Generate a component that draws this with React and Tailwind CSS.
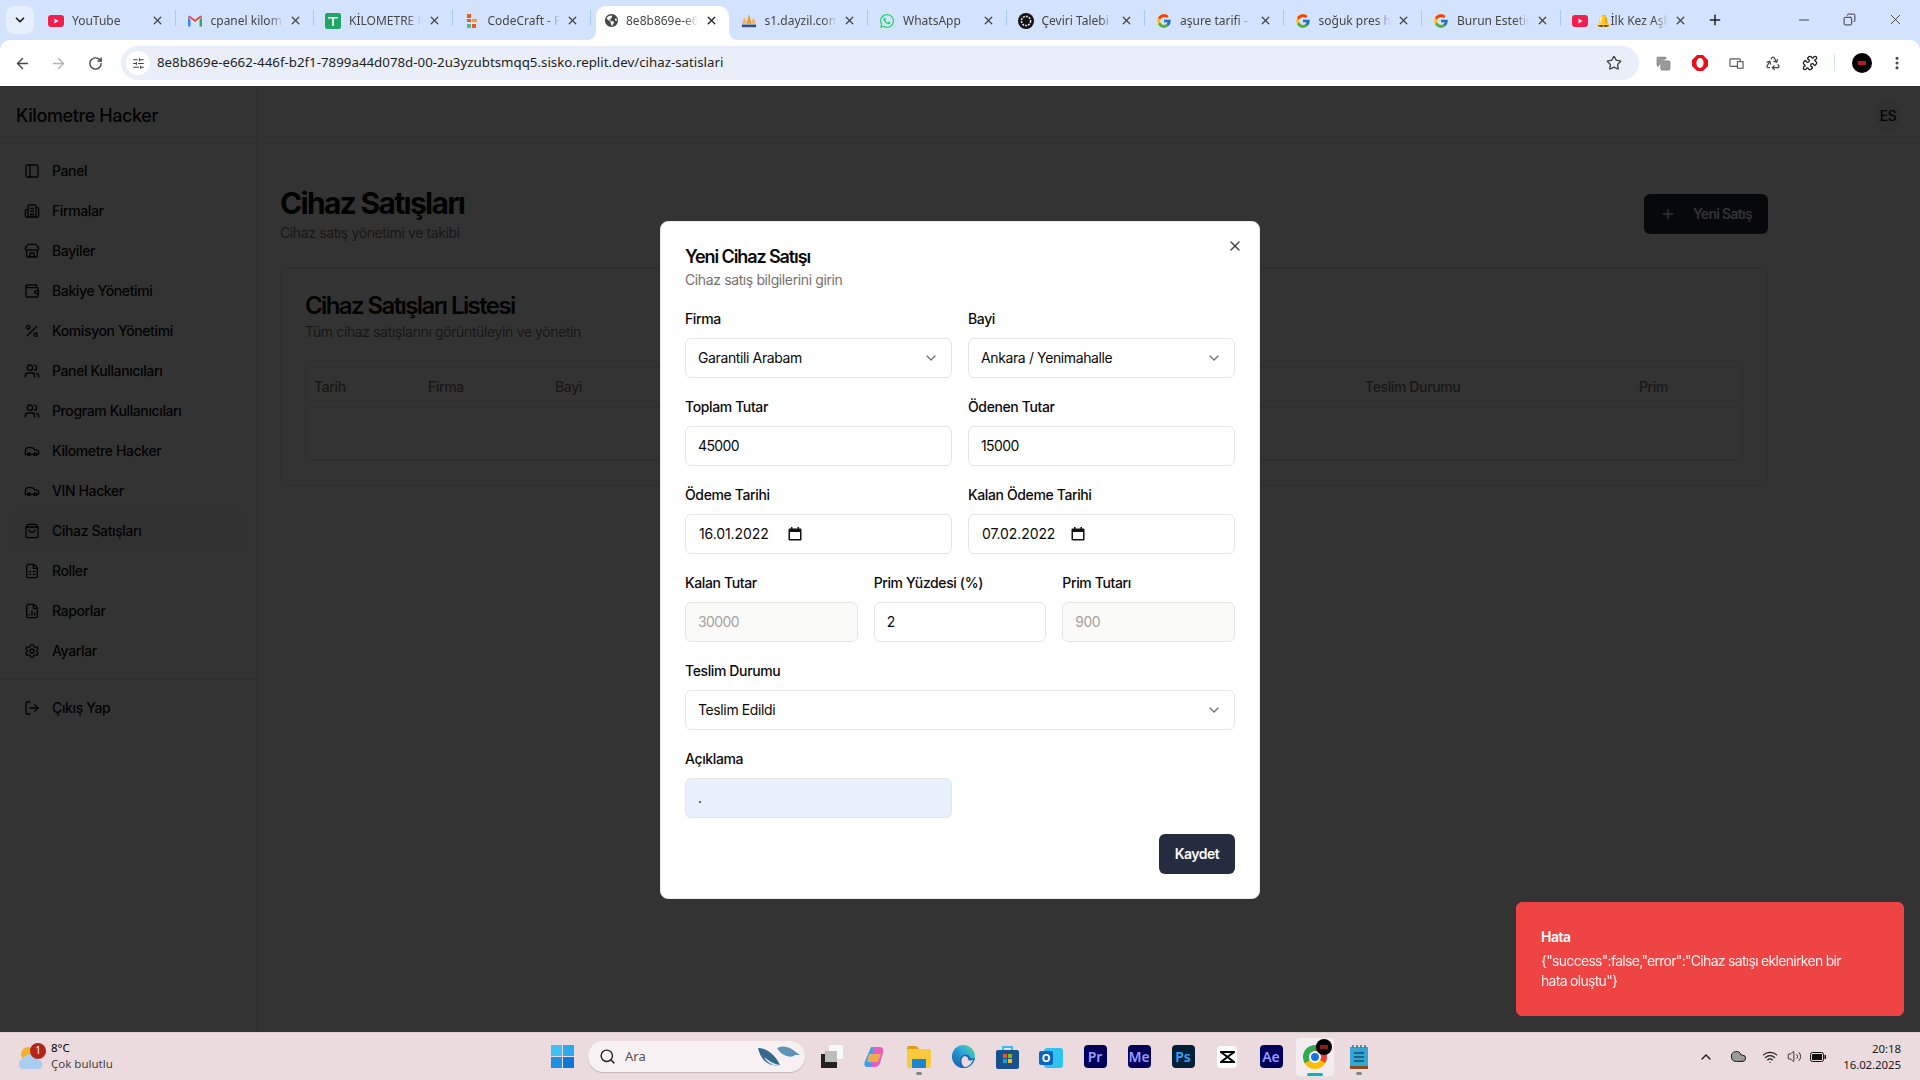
import React from "react";
import {
  PanelLeft, Building2, Store, Wallet, Percent, Users, Car, ShoppingBag, FileSpreadsheet, FileChartColumn,
  Settings, LogOut, Plus, X, ChevronDown, ArrowLeft, ArrowRight, RotateCw, Star, Puzzle, Recycle, MoreVertical,
  Minus, Search, ChevronUp, Wifi, Volume2, Cloud, SlidersHorizontal, Copy,
} from "lucide-react";
import { FcGoogle } from "react-icons/fc";
import { FaWhatsapp, FaGlobeAmericas } from "react-icons/fa";

const YT = () => (
  <svg width="16" height="16" viewBox="0 0 16 16"><rect y="2" width="16" height="12" rx="3" fill="#f01f4b" /><path d="M6.5 5.5v5l4-2.5z" fill="#fff" /></svg>
);
const Gm = () => (
  <svg width="16" height="16" viewBox="0 0 16 16"><path d="M1 3.5v10h2.5V7z" fill="#4285f4" /><path d="M15 3.5v10h-2.5V7z" fill="#34a853" /><path d="M1 3.5 8 9l7-5.5-1.5-1L8 6.800 2.500 2.500z" fill="#ea4335" /></svg>
);
const Sh = () => (
  <svg width="16" height="16" viewBox="0 0 16 16"><rect width="16" height="16" rx="2" fill="#23a566" /><path d="M3 4h10v1.600H8.800V13H7.200V5.600H3z" fill="#fff" /></svg>
);
const CC = () => (
  <svg width="16" height="16" viewBox="0 0 16 16"><rect x="3" y="1" width="4" height="4" fill="#f4581c" /><rect x="8" y="6" width="5" height="3" fill="#f79a2a" /><rect x="3" y="6" width="4" height="3" fill="#f4581c" /><rect x="3" y="11" width="4" height="4" fill="#4cc38a" /><rect x="8" y="11" width="4" height="4" fill="#f4581c" /></svg>
);
const Pma = () => (
  <svg width="18" height="16" viewBox="0 0 18 16"><path d="M9 0l3 11H6z" fill="#f39a2b" /><path d="M4 4l3 7H1z" fill="#f6b25a" /><path d="M14 4l3 7h-6z" fill="#f6b25a" /><rect x="1" y="12" width="16" height="3" fill="#33537f" /></svg>
);
const Gpt = () => (
  <svg width="16" height="16" viewBox="0 0 16 16"><circle cx="8" cy="8" r="8" fill="#111" /><circle cx="8" cy="8" r="4.600" fill="none" stroke="#ddd" strokeWidth="1.600" strokeDasharray="2 1" /></svg>
);
const tabs = [
  { t: "YouTube", i: <YT /> },
  { t: "cpanel kilometre", i: <Gm /> },
  { t: "KİLOMETRE HACKER", i: <Sh /> },
  { t: "CodeCraft - Full", i: <CC /> },
  { t: "8e8b869e-e662", i: <FaGlobeAmericas size={15} className="ml-[3px] text-[#444746]" />, active: true },
  { t: "s1.dayzil.com", i: <Pma /> },
  { t: "WhatsApp", i: <FaWhatsapp size={16} className="text-[#25d366]" /> },
  { t: "Çeviri Talebi", i: <Gpt /> },
  { t: "aşure tarifi - ", i: <FcGoogle size={16} /> },
  { t: "soğuk pres h", i: <FcGoogle size={16} /> },
  { t: "Burun Estetiği", i: <FcGoogle size={16} /> },
  { t: "🔔İlk Kez Aşk", i: <YT /> },
];

const Tab = ({ t, i, active, last }) => (
  <div className="relative flex h-[34px] w-[138.5px] shrink-0 items-center pb-[5px] pl-3 pr-[11px]">
    {active && <span className="absolute bottom-0 left-[6px] right-0 top-0 rounded-t-[10px] bg-white" />}
    {active && <span className="absolute bottom-0 left-[-2px] h-2 w-2 bg-[radial-gradient(circle_at_0_0,transparent_7.5px,white_8px)]" />}
    {active && <span className="absolute bottom-0 right-[-8px] h-2 w-2 bg-[radial-gradient(circle_at_100%_0,transparent_7.5px,white_8px)]" />}
    <span className="relative flex w-[16px] shrink-0 items-center justify-center">{i}</span>
    <span className="relative ml-2 w-[72px] shrink-0 overflow-hidden whitespace-nowrap text-xs text-[#444746] [mask-image:linear-gradient(to_right,black_80%,transparent)]">{t}</span>
    <X size={13} strokeWidth={2.4} className={`relative ml-auto ${active ? "text-[#1f1f1f]" : "text-[#444746]"}`} />
    {!active && !last && <span className="absolute right-[-1px] top-[4px] h-4 w-px bg-[#a8c7fa]" />}
  </div>
);

const TabBar = () => (
  <div className="flex h-10 shrink-0 items-end bg-[#d3e3fd] font-['Noto_Sans',sans-serif] tracking-normal">
    <div className="mb-[6px] ml-[6px] flex h-7 w-7 shrink-0 items-center justify-center rounded-lg bg-[#e6effd]">
      <ChevronDown size={14} strokeWidth={3} className="text-[#1f1f1f]" />
    </div>
    <div className="ml-[2px] flex">
      {tabs.map((x, n) => <Tab key={n} {...x} last={n === 11} />)}
    </div>
    <div className="mb-[6px] ml-[3px] flex h-7 w-7 items-center justify-center"><Plus size={16} strokeWidth={2.2} className="text-[#1f1f1f]" /></div>
    <div className="mb-[12px] ml-auto flex w-[130px] items-center justify-between pl-[6px] pr-[16px] text-[#1f1f1f]">
      <Minus size={16} strokeWidth={1.2} />
      <Copy size={13} strokeWidth={1.6} className="-scale-x-100" />
      <X size={17} strokeWidth={1.1} />
    </div>
  </div>
);

const Toolbar = () => (
  <div className="flex h-[46px] shrink-0 items-center rounded-t-[10px] bg-white pl-[14px] pr-[14px] font-['Noto_Sans',sans-serif] tracking-normal">
    <ArrowLeft size={17} strokeWidth={2} className="text-[#444746]" />
    <ArrowRight size={17} strokeWidth={2} className="ml-[19px] text-[#b0b3b7]" />
    <RotateCw size={15} strokeWidth={2.2} className="ml-[21px] text-[#444746]" />
    <div className="ml-[18px] flex h-[34px] w-[1518px] items-center rounded-full bg-[#e9eef8] pl-[5px] pr-[17px]">
      <span className="flex h-6 w-6 items-center justify-center rounded-full bg-white"><SlidersHorizontal size={13} className="text-[#444746]" /></span>
      <span className="ml-[7px] whitespace-nowrap text-[13.3px] text-[#1f1f1f]">8e8b869e-e662-446f-b2f1-7899a44d078d-00-2u3yzubtsmqq5.sisko.replit.dev/cihaz-satislari</span>
      <Star size={16} strokeWidth={2} className="ml-auto text-[#444746]" />
    </div>
    <div className="ml-[17px] flex items-center gap-[21px]">
      <Copy size={15} fill="#9a9a9a" className="text-[#8a8a8a]" />
      <svg width="16" height="16" viewBox="0 0 16 16"><path d="M5 0h6l5 5v6l-5 5H5l-5-5V5z" fill="#e8101a" /><ellipse cx="8" cy="8" rx="3.600" ry="5" fill="#fff" /></svg>
      <svg width="15" height="15" viewBox="0 0 16 16" fill="none" stroke="#555" strokeWidth="1.200"><rect x="1" y="3" width="11" height="8" rx="1" /><rect x="9" y="6" width="6" height="7" fill="#fff" /></svg>
      <Recycle size={16} strokeWidth={1.8} className="text-[#444746]" />
      <Puzzle size={16} strokeWidth={2} className="text-[#1f1f1f]" />
    </div>
    <span className="ml-[16px] h-[18px] w-px bg-[#d3e3fd]" />
    <span className="ml-[17px] flex h-5 w-5 items-center justify-center rounded-full bg-black"><span className="h-1 w-2 bg-[#b02020]" /></span>
    <MoreVertical size={16} strokeWidth={2.6} className="ml-[17px] text-[#444746]" />
  </div>
);

const nav = [
  [PanelLeft, "Panel"], [Building2, "Firmalar"], [Store, "Bayiler"], [Wallet, "Bakiye Yönetimi"], [Percent, "Komisyon Yönetimi"],
  [Users, "Panel Kullanıcıları"], [Users, "Program Kullanıcıları"], [Car, "Kilometre Hacker"], [Car, "VIN Hacker"],
  [ShoppingBag, "Cihaz Satışları", true], [FileSpreadsheet, "Roller"], [FileChartColumn, "Raporlar"], [Settings, "Ayarlar"],
];

const NavRow = ({ Icon, label, active }) => (
  <div className={`mx-2 flex h-10 items-center gap-3 rounded-md px-4 text-sm font-medium ${active ? "bg-[#f5f5f4]" : ""}`}>
    <Icon size={16} strokeWidth={2} className="shrink-0" />
    <span>{label}</span>
  </div>
);

const Sidebar = () => (
  <div className="flex w-[257px] shrink-0 flex-col border-r border-[#e7e5e4] bg-white text-[#0c0a09]">
    <div className="flex h-[57px] shrink-0 items-center border-b border-[#e7e5e4] px-4 pt-1 text-lg font-medium tracking-[-0.4px]">Kilometre Hacker</div>
    <div className="py-2">
      {nav.map(([I, l, a]) => <NavRow key={l} Icon={I} label={l} active={a} />)}
    </div>
    <div className="border-t border-[#e7e5e4] py-2"><NavRow Icon={LogOut} label="Çıkış Yap" /></div>
  </div>
);

const Main = () => (
  <div className="flex min-w-0 flex-1 flex-col bg-white text-[#0c0a09]">
    <div className="flex h-[57px] shrink-0 items-center justify-end border-b border-[#e7e5e4] pr-[18px] pt-1">
      <span className="flex h-7 w-7 items-center justify-center rounded-full bg-[#f5f5f4] text-sm font-medium">ES</span>
    </div>
    <div className="pl-[23px] pr-[152px] pt-[42px]">
      <div className="flex items-center justify-between">
        <div>
          <div className="h-9 text-3xl font-bold leading-9 tracking-[-1.7px]">Cihaz Satışları</div>
          <div className="mt-[2px] text-sm leading-5 text-[#78716c]">Cihaz satış yönetimi ve takibi</div>
        </div>
        <div className="flex h-10 w-[124px] items-center justify-center gap-[17px] rounded-md bg-[#1e293b] text-sm font-semibold tracking-[-0.7px] text-[#fafaf9]">
          <Plus size={16} />Yeni Satış
        </div>
      </div>
      <div className="mt-6 rounded-lg border border-[#e7e5e4] px-6 pb-6 pt-6">
        <div className="h-7 text-2xl font-semibold leading-7 tracking-[-1.6px]">Cihaz Satışları Listesi</div>
        <div className="mt-[2px] text-sm leading-5 text-[#78716c]">Tüm cihaz satışlarını görüntüleyin ve yönetin</div>
        <div className="mt-6 rounded-md border border-[#e7e5e4]">
          <div className="flex h-10 items-center border-b border-[#e7e5e4] text-sm font-medium text-[#78716c]">
            <span className="w-[122px] pl-2">Tarih</span>
            <span className="w-[127px]">Firma</span>
            <span>Bayi</span>
            <span className="ml-auto w-[274px]">Teslim Durumu</span>
            <span className="w-[103px]">Prim</span>
          </div>
          <div className="h-[53px]" />
        </div>
      </div>
    </div>
  </div>
);

const Field = ({ label, className = "", children }) => (
  <div className={className}>
    <div className="mb-[9px] h-5 whitespace-nowrap text-sm font-medium leading-5 text-[#0c0a09]">{label}</div>
    {children}
  </div>
);
const Box = ({ children, className = "" }) => (
  <div className={`flex h-10 items-center rounded-md border border-[#e7e5e4] px-3 text-sm text-[#0c0a09] ${className}`}>{children}</div>
);
const Sel = ({ children }) => (
  <Box className="justify-between">{children}<ChevronDown size={16} className="text-[#78716c]" /></Box>
);
const Num = ({ children, className = "" }) => <Box className={`tracking-[-0.6px] ${className}`}>{children}</Box>;
const Cal = () => (
  <svg width="14" height="14" viewBox="0 0 14 14"><path d="M3 0v1.500H1.500a1 1 0 0 0-1 1v10a1 1 0 0 0 1 1h11a1 1 0 0 0 1-1v-10a1 1 0 0 0-1-1H11V0H9.500v1.500h-5V0zM2 5h10v7H2z" fill="#111" /></svg>
);
const DateBox = ({ children }) => (
  <Box className="pl-[13px] tracking-[-0.1px]"><span className="w-[89px]">{children}</span><Cal /></Box>
);

const Modal = () => (
  <div className="relative mt-[2px] h-[678px] w-[600px] rounded-lg border border-[#e7e5e4] bg-white p-6">
    <X size={16} className="absolute right-4 top-4 text-[#44403c]" />
    <div className="text-lg font-semibold leading-[21px] tracking-[-1.1px] text-[#0c0a09]">Yeni Cihaz Satışı</div>
    <div className="mt-[3px] text-sm leading-5 text-[#78716c]">Cihaz satış bilgilerini girin</div>
    <div className="mt-[19px] flex flex-col gap-[19px]">
      <div className="grid grid-cols-2 gap-x-4 gap-y-[19px]">
        <Field label="Firma"><Sel>Garantili Arabam</Sel></Field>
        <Field label="Bayi"><Sel>Ankara / Yenimahalle</Sel></Field>
        <Field label="Toplam Tutar"><Num>45000</Num></Field>
        <Field label="Ödenen Tutar"><Num>15000</Num></Field>
        <Field label="Ödeme Tarihi"><DateBox>16.01.2022</DateBox></Field>
        <Field label="Kalan Ödeme Tarihi"><DateBox>07.02.2022</DateBox></Field>
      </div>
      <div className="grid grid-cols-3 gap-4">
        <Field label="Kalan Tutar"><Num className="bg-[#fafaf9] !text-[#a8a29e]">30000</Num></Field>
        <Field label="Prim Yüzdesi (%)"><Box>2</Box></Field>
        <Field label="Prim Tutarı"><Num className="bg-[#fafaf9] !text-[#a8a29e]">900</Num></Field>
      </div>
      <Field label="Teslim Durumu"><Sel>Teslim Edildi</Sel></Field>
      <Field label="Açıklama" className="w-[267px]"><Box className="bg-[#e8f0fe]">.</Box></Field>
    </div>
    <div className="mt-4 flex justify-end">
      <div className="flex h-10 w-[76px] items-center justify-center rounded-md bg-[#252c40] text-sm font-semibold tracking-[-0.5px] text-[#fafaf9]">Kaydet</div>
    </div>
  </div>
);

const Toast = () => (
  <div className="absolute bottom-4 right-4 w-[388px] rounded-md border border-[#ef4444] bg-[#ef4444] p-6 text-sm text-white">
    <div className="font-semibold leading-5 tracking-[-0.5px]">Hata</div>
    <div className="mt-1 whitespace-nowrap leading-5 tracking-[-0.7px] opacity-90">{'{"success":false,"error":"Cihaz satışı eklenirken bir'}<br />{'hata oluştu"}'}</div>
  </div>
);

const Tile = ({ bg, fg, children }) => (
  <span className={`flex h-[23px] w-[23px] items-center justify-center rounded-[4px] text-sm font-semibold ${bg} ${fg}`}>{children}</span>
);
const Slot = ({ children, dot, active }) => (
  <div className={`relative flex h-[38px] w-[38px] items-center justify-center rounded-[4px] ${active ? "bg-[#f4ecee]" : ""}`}>
    {children}
    {dot && <span className="absolute bottom-[1px] h-[3px] w-[6px] rounded-full bg-[#868686]" />}
    {active && <span className="absolute bottom-0 h-[3px] w-4 rounded-full bg-[#00b7c3]" />}
  </div>
);

const Taskbar = () => (
  <div className="flex h-12 shrink-0 items-center border-t border-[#d9cdd0] bg-[#ecdbde] font-['Noto_Sans',sans-serif] tracking-normal text-[#1a1a1a]">
    <div className="relative ml-[19px] flex w-[24px] items-center justify-center">
      <svg width="24" height="28" viewBox="0 0 24 28"><circle cx="9" cy="11" r="7" fill="#f5b031" /><path d="M5 26a5 5 0 0 1-1-10 8 8 0 0 1 15 1 4.500 4.500 0 0 1 0 9z" fill="#a9cdf0" /></svg>
      <span className="absolute left-[11px] top-0 flex h-4 w-4 items-center justify-center rounded-full bg-[#b5241c] text-[10px] text-white">1</span>
    </div>
    <div className="mb-[2px] ml-2 flex w-[80px] flex-col text-[11.5px] leading-4">
      <span className="text-black">8°C</span>
      <span className="text-[#444]">Çok bulutlu</span>
    </div>
    <div className="ml-[420px] grid h-[23px] w-[23px] grid-cols-2 gap-[1.5px]">
      <span className="bg-[#3fc1f5]" /><span className="bg-[#2ba8ee]" /><span className="bg-[#1f8fe0]" /><span className="bg-[#0d78d4]" />
    </div>
    <div className="ml-[14px] flex h-[31px] w-[217px] items-center rounded-full bg-[#f8f1f3] pl-[11px] pr-1 shadow-[0_1px_1px_rgba(0,0,0,.18)]">
      <Search size={17} strokeWidth={2} className="text-[#222]" />
      <span className="ml-[9px] text-[13px] text-[#555]">Ara</span>
      <svg width="44" height="24" viewBox="0 0 44 24" className="ml-auto"><path d="M1 3c8 0 17 6 22 17-9 2-19-3-22-17z" fill="#34688c" /><path d="M7 12c5 4 10 7 16 8-6 2-13-2-16-8z" fill="#d8e8f2" /><path d="M20 3c5-3 13-2 20 5l3 2-5 0c-2 2-5 2-8 1-4-1-8-4-10-8z" fill="#5d93b5" /></svg>
    </div>
    <div className="ml-[16px] flex w-[16px] items-center justify-start overflow-visible">
      <span className="relative block h-[23px] w-[22px] shrink-0">
        <span className="absolute right-0 top-0 h-[14px] w-[14px] bg-[#fafafa]" />
        <span className="absolute bottom-0 left-0 h-[14px] w-[16px] bg-[#222]" />
        <span className="absolute left-[4px] top-[6px] h-[11px] w-[12px] bg-[#bdbdbd]" />
      </span>
    </div>
    <div className="ml-[19px] flex items-center gap-[6px]">
      <Slot><svg width="24" height="24" viewBox="0 0 24 24"><path d="M8 2h5l-4 20H4c-3 0-3-3-2-6z" fill="#3f9fe8" /><path d="M11 2h6c3 0 4 3 3 6l-3 10c-1 3-3 4-5 4H8z" fill="#e35fc4" /><path d="M6 9h12l-3 8H4z" fill="#f9b23d" opacity=".85" /></svg></Slot>
      <Slot dot><svg width="24" height="22" viewBox="0 0 24 22"><path d="M0 2a2 2 0 0 1 2-2h7l3 3h10a2 2 0 0 1 2 2v15a2 2 0 0 1-2 2H2a2 2 0 0 1-2-2z" fill="#f8c93c" /><rect x="5" y="13" width="14" height="9" rx="1" fill="#1a86d0" /><path d="M0 2a2 2 0 0 1 2-2h7l3 3H0z" fill="#d9a01c" /></svg></Slot>
      <Slot><svg width="23" height="23" viewBox="0 0 24 24"><defs><linearGradient id="ed" x1="0" y1="1" x2="1" y2="0"><stop offset="0" stopColor="#0c59a4" /><stop offset=".6" stopColor="#2fa8dd" /><stop offset="1" stopColor="#5fdc86" /></linearGradient></defs><circle cx="12" cy="12" r="12" fill="url(#ed)" /><path d="M11 11c3-2 7-1 8 2 1 2 4 1 5 0-1 6-6 11-12 11-1 0-2-1-3-2-2-4-1-9 2-11z" fill="#1767b3" /><path d="M12 12c3-1 5 1 5 3 0 1 2 2 5 0-1 4-5 8-9 8-4-3-4-9-1-11z" fill="#ecdbde" /></svg></Slot>
      <Slot><svg width="23" height="24" viewBox="0 0 23 24"><path d="M7 5V2h9v3" fill="none" stroke="#31c1ee" strokeWidth="2" /><rect y="5" width="23" height="19" rx="2" fill="#17508a" /><rect x="7" y="9" width="4" height="4" fill="#f35325" /><rect x="12" y="9" width="4" height="4" fill="#81bc06" /><rect x="7" y="14" width="4" height="4" fill="#05a6f0" /><rect x="12" y="14" width="4" height="4" fill="#ffba08" /></svg></Slot>
      <Slot><span className="relative block h-[24px] w-[24px]"><span className="absolute right-0 top-[3px] h-[20px] w-[19px] rounded-[3px] bg-[#2fc3f2]" /><span className="absolute left-0 top-[6px] flex h-[14px] w-[14px] items-center justify-center rounded-[2px] bg-[#0a64c0] text-[11px] font-bold leading-none text-white">O</span></span></Slot>
      <Slot><Tile bg="bg-[#00005b]" fg="text-[#9999ff]">Pr</Tile></Slot>
      <Slot><Tile bg="bg-[#00005b]" fg="text-[#9999ff]">Me</Tile></Slot>
      <Slot><Tile bg="bg-[#001e36]" fg="text-[#31a8ff]">Ps</Tile></Slot>
      <Slot><span className="flex h-[22px] w-[20px] items-center justify-center rounded-[4px] bg-white"><svg width="15" height="12" viewBox="0 0 15 12" fill="none" stroke="#000" strokeWidth="2"><path d="M1 1h13L1 11h13z" /></svg></span></Slot>
      <Slot><Tile bg="bg-[#00005b]" fg="text-[#9999ff]">Ae</Tile></Slot>
      <Slot active>
        <span className="relative block h-6 w-6 rounded-full bg-[conic-gradient(#ea4335_0_33%,#fbbc04_33%_66%,#34a853_66%_100%)]">
          <span className="absolute left-[6px] top-[6px] h-3 w-3 rounded-full border-2 border-white bg-[#1a73e8]" />
          <span className="absolute left-[13px] top-[-6px] flex h-4 w-4 items-center justify-center rounded-full bg-black"><span className="h-1 w-2 bg-[#8c1c1c]" /></span>
        </span>
      </Slot>
      <Slot dot><svg width="18" height="24" viewBox="0 0 18 24"><rect y="2" width="18" height="19" fill="#35a6d2" /><rect y="21" width="18" height="3" fill="#8a4b22" /><path d="M3 0v3M7 0v3M11 0v3M15 0v3" stroke="#2a7ea3" strokeWidth="1.500" /><path d="M4 8h10M4 12h10M4 16h10" stroke="#0f4f6e" strokeWidth="1.500" /></svg></Slot>
    </div>
    <div className="ml-auto flex items-center pr-[19px]">
      <ChevronUp size={16} strokeWidth={2} className="mr-[15.5px]" />
      <Cloud size={17} fill="#9a9a9a" strokeWidth={1.4} className="mr-[15.5px]" />
      <Wifi size={16} strokeWidth={1.8} className="mr-[8.5px]" />
      <Volume2 size={15} strokeWidth={1.4} className="mr-[8.5px]" />
      <svg width="16" height="10" viewBox="0 0 16 10" className="mr-[17px]"><rect x=".5" y=".5" width="13" height="9" rx="2" fill="none" stroke="#111" /><rect x="2" y="2" width="10" height="6" fill="#111" /><rect x="14.500" y="3" width="1.500" height="4" fill="#111" /></svg>
      <div className="flex flex-col items-end text-[11.5px] leading-4 tracking-[-0.1px]">
        <span>20:18</span>
        <span>16.02.2025</span>
      </div>
    </div>
  </div>
);

export default function App() {
  return (
    <div className="flex h-screen w-screen flex-col overflow-hidden bg-[#d3e3fd] font-['Inter',sans-serif] tracking-[-0.38px]">
      <TabBar />
      <Toolbar />
      <div className="relative flex min-h-0 flex-1">
        <Sidebar />
        <Main />
        <div className="absolute inset-0 flex items-center justify-center bg-black/80">
          <Modal />
        </div>
        <Toast />
      </div>
      <Taskbar />
    </div>
  );
}
